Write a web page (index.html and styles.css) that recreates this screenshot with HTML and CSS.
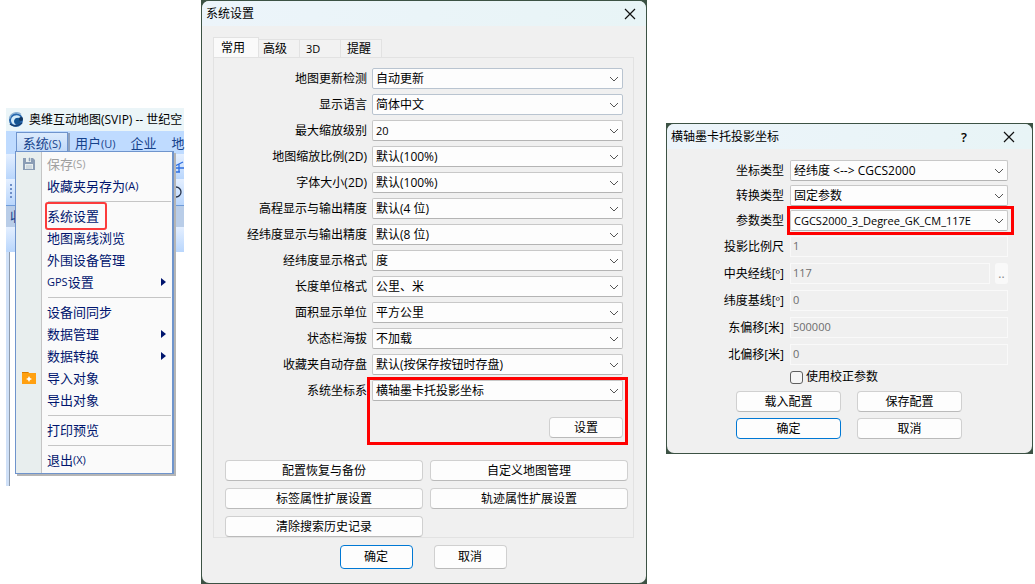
FILE: index.html
```
<!DOCTYPE html>
<html lang="zh-CN">
<head>
    <meta charset="UTF-8">
    <meta name="viewport" content="width=device-width, initial-scale=1.0">
    <title>系统设置</title>
    <link rel="stylesheet" href="styles.css">
</head>
<body>
<main class="page">

    <!-- Main window with the open system menu -->
    <section class="app">
        <header class="app-title">
            <svg class="logo" viewBox="0 0 16 16" width="16" height="16">
                <circle cx="8" cy="8" r="7" fill="#2767ad"/>
                <path d="M13 2.500A7 7 0 0 0 1.500 6.500" fill="none" stroke="#8fb4d6" stroke-width="1.500"/>
                <path d="M12 4.500A5.500 5.500 0 0 0 3 9Q4 13 8 13Q4.500 10 7 7Q9 5 12.500 6z" fill="#d4ecfa"/>
                <circle cx="9.500" cy="9" r="3" fill="#15538f"/>
                <circle cx="13" cy="7" r="2" fill="#12365e"/>
                <path d="M2 12Q7 16 14 11" fill="none" stroke="#173f70" stroke-width="1.500"/>
            </svg>
            <span>奥维互动地图(SVIP) -- 世纪空</span>
        </header>
        <nav class="menubar">
            <button class="menubar-item open">系统<small>(S)</small></button>
            <button class="menubar-item">用户<small>(U)</small></button>
            <button class="menubar-item">企业</button>
            <button class="menubar-item">地</button>
        </nav>
        <div class="toolbar">
            <svg viewBox="0 0 10 12" width="10" height="12"><path d="M0 7h10M5 3v8M1 5l8-4M1 11h5" fill="none" stroke="#2f6fe0" stroke-width="1.300"/></svg>
        </div>
        <div class="toolbar second">
            <span class="grip"></span>
            <svg viewBox="0 0 10 14" width="10" height="14"><circle cx="2" cy="7" r="5" fill="none" stroke="#26324a" stroke-width="1.300"/></svg>
        </div>
        <div class="side-title">收藏夹</div>
        <div class="toolbar third"></div>
        <div class="canvas"></div>

        <div class="menu">
            <button class="menu-item" disabled>
                <svg class="icon" viewBox="0 0 14 14" width="14" height="14">
                    <path d="M1 1h10l2 2v10H1z" fill="#8b9db5"/>
                    <path d="M4 1h5v4H4zM3 7h8v5H3z" fill="#e8eeee"/>
                    <path d="M7 1h1v3H7zM4 9h6M4 11h6" fill="#8b9db5" stroke="#8b9db5" stroke-width=".5"/>
                </svg>
                保存<small>(S)</small>
            </button>
            <button class="menu-item">收藏夹另存为<small>(A)</small></button>
            <hr>
            <button class="menu-item marked"><span>系统设置</span></button>
            <button class="menu-item">地图离线浏览</button>
            <button class="menu-item">外围设备管理</button>
            <button class="menu-item sub"><small>GPS</small>设置</button>
            <hr>
            <button class="menu-item">设备间同步</button>
            <button class="menu-item sub">数据管理</button>
            <button class="menu-item sub">数据转换</button>
            <button class="menu-item">
                <svg class="icon" viewBox="0 0 14 14" width="14" height="14">
                    <path d="M0 1h6l1 1h7v11H0z" fill="#ffa010"/>
                    <path d="M0 1h6l1 1H0z" fill="#d97c00"/>
                    <path d="M7 5l1 2 2 1-2 1-1 2-1-2-2-1 2-1z" fill="#ffffff"/>
                </svg>
                导入对象
            </button>
            <button class="menu-item">导出对象</button>
            <hr>
            <button class="menu-item">打印预览</button>
            <hr>
            <button class="menu-item">退出<small>(X)</small></button>
        </div>
    </section>

    <!-- System settings -->
    <section class="dialog settings">
        <div class="dialog-inner">
            <header class="dialog-title">
                <span>系统设置</span>
                <button class="title-btn" aria-label="关闭"><svg viewBox="0 0 12 12" width="12" height="12"><path d="M1 1l10 10M11 1L1 11" stroke="#111" stroke-width="1.200"/></svg></button>
            </header>
            <div class="tabs" role="tablist">
                <button class="tab active" role="tab">常用</button>
                <button class="tab" role="tab">高级</button>
                <button class="tab latin" role="tab">3D</button>
                <button class="tab" role="tab">提醒</button>
            </div>
            <form class="pane">
                <div class="rows">
                    <label for="update">地图更新检测</label>
                    <select id="update" class="hot"><option>自动更新</option></select>
                    <label for="lang">显示语言</label>
                    <select id="lang" class="hot"><option>简体中文</option></select>
                    <label for="zoom">最大缩放级别</label>
                    <select id="zoom" class="latin"><option>20</option></select>
                    <label for="scale">地图缩放比例(2D)</label>
                    <select id="scale"><option>默认(100%)</option></select>
                    <label for="font">字体大小(2D)</label>
                    <select id="font"><option>默认(100%)</option></select>
                    <label for="alt">高程显示与输出精度</label>
                    <select id="alt"><option>默认(4 位)</option></select>
                    <label for="lnglat">经纬度显示与输出精度</label>
                    <select id="lnglat"><option>默认(8 位)</option></select>
                    <label for="format">经纬度显示格式</label>
                    <select id="format"><option>度</option></select>
                    <label for="length">长度单位格式</label>
                    <select id="length"><option>公里、米</option></select>
                    <label for="area">面积显示单位</label>
                    <select id="area"><option>平方公里</option></select>
                    <label for="status">状态栏海拔</label>
                    <select id="status"><option>不加载</option></select>
                    <label for="save">收藏夹自动存盘</label>
                    <select id="save"><option>默认(按保存按钮时存盘)</option></select>
                    <label for="coord">系统坐标系</label>
                    <div class="red-box coord-box">
                        <select id="coord"><option>横轴墨卡托投影坐标</option></select>
                        <button type="button" class="btn small-btn">设置</button>
                    </div>
                </div>
                <div class="extras">
                    <button type="button" class="btn">配置恢复与备份</button>
                    <button type="button" class="btn">自定义地图管理</button>
                    <button type="button" class="btn">标签属性扩展设置</button>
                    <button type="button" class="btn">轨迹属性扩展设置</button>
                    <button type="button" class="btn">清除搜索历史记录</button>
                </div>
            </form>
            <footer class="dialog-actions">
                <button class="btn primary">确定</button>
                <button class="btn">取消</button>
            </footer>
        </div>
    </section>

    <!-- Projection parameters -->
    <section class="dialog projection">
        <div class="dialog-inner">
            <header class="dialog-title">
                <span>横轴墨卡托投影坐标</span>
                <button class="title-btn help" aria-label="帮助">?</button>
                <button class="title-btn" aria-label="关闭"><svg viewBox="0 0 12 12" width="12" height="12"><path d="M1 1l10 10M11 1L1 11" stroke="#111" stroke-width="1.200"/></svg></button>
            </header>
            <form class="params">
                <div class="rows choices">
                    <label for="ctype">坐标类型</label>
                    <select id="ctype"><option>经纬度 &lt;--&gt; CGCS2000</option></select>
                    <label for="conv">转换类型</label>
                    <select id="conv"><option>固定参数</option></select>
                    <label for="ptype">参数类型</label>
                    <div class="red-box type-box">
                        <select id="ptype" class="latin"><option>CGCS2000_3_Degree_GK_CM_117E</option></select>
                    </div>
                </div>
                <div class="rows values">
                    <label for="ratio">投影比例尺</label>
                    <input type="text" id="ratio" class="latin" value="1" disabled>
                    <label for="meridian">中央经线[º]</label>
                    <div class="with-button">
                        <input type="text" id="meridian" class="latin" value="117" disabled>
                        <button type="button" class="more" disabled>..</button>
                    </div>
                    <label for="base">纬度基线[º]</label>
                    <input type="text" id="base" class="latin" value="0" disabled>
                    <label for="east">东偏移[米]</label>
                    <input type="text" id="east" class="latin" value="500000" disabled>
                    <label for="north">北偏移[米]</label>
                    <input type="text" id="north" class="latin" value="0" disabled>
                </div>
                <div class="check">
                    <input type="checkbox" id="correct">
                    <label for="correct">使用校正参数</label>
                </div>
                <div class="param-actions">
                    <button type="button" class="btn">载入配置</button>
                    <button type="button" class="btn">保存配置</button>
                    <button type="button" class="btn primary">确定</button>
                    <button type="button" class="btn">取消</button>
                </div>
            </form>
        </div>
    </section>

</main>
</body>
</html>
```
FILE: styles.css
```
* {
    box-sizing: border-box;
}
body {
    margin: 0;
    background: #fff;
    color: #000;
    font-family: "Open Sans", "Noto Sans CJK SC", sans-serif;
    font-size: 12px;
    line-height: 16px;
}
button, input, select {
    margin: 0;
    font: inherit;
    color: inherit;
}
.latin {
    font-size: 11px;
}
svg {
    display: block;
    flex: none;
}
.page {
    display: grid;
    grid-template-columns: 178fr 446fr 369fr;
    column-gap: 17px;
    align-items: start;
    padding: 0 2px 0 6px;
}

/* main window */
.app {
    position: relative;
    min-width: 0;
    margin-top: 108px;
}
.app-title {
    display: flex;
    align-items: center;
    gap: 5px;
    height: 23px;
    padding-left: 2px;
    background: #ebf5f8;
    white-space: nowrap;
}
.menubar {
    display: flex;
    height: 23px;
    padding: 1px 0 0 10px;
    background: #bfdbff;
}
.menubar-item {
    flex: none;
    padding: 0 0 0 7px;
    margin-right: 8px;
    border: 0;
    background: none;
    color: #15428b;
    font-size: 13px;
    line-height: 18px;
}
.menubar-item:last-child {
    margin-right: 0;
}
.menubar-item small, .menu-item small {
    font-size: 11px;
}
.menubar-item.open {
    width: 52px;
    margin-right: 0;
    padding: 0 4px;
    border: 1px solid #6f94cc;
    border-bottom: 0;
    background: linear-gradient(#dcebfd, #bcd6f8);
    box-shadow: 2px 1px 0 #8fa3bf;
}
.toolbar {
    display: flex;
    align-items: center;
    justify-content: flex-end;
    height: 25px;
    background: linear-gradient(#e4efff, #b9d6fc);
}
.toolbar.second {
    justify-content: space-between;
    height: 27px;
    border-bottom: 1px solid #6f9bd8;
}
.grip {
    width: 2px;
    height: 16px;
    margin-left: 4px;
    background: repeating-linear-gradient(#6f8fc8 0 2px, transparent 2px 4px);
}
.side-title {
    height: 21px;
    padding-left: 4px;
    background: #b9cde8;
    color: #15428b;
    font-size: 13px;
    line-height: 20px;
}
.canvas {
    height: 234px;
    border-left: 3px solid #cfe0f7;
    box-shadow: inset 1px 0 0 #8f9bab;
}

.menu {
    position: absolute;
    top: 43px;
    left: 9px;
    right: 10px;
    padding: 1px 0 2px;
    border: 1px solid #6f94cc;
    border-right-width: 2px;
    background: linear-gradient(90deg, #e8eeee 25px, #c5c5c5 25px 26px, #fafafa 26px);
    box-shadow: 2px 2px 0 #b5b5b5;
}
.menu-item {
    display: flex;
    position: relative;
    align-items: center;
    width: 100%;
    height: 22px;
    padding: 0 6px 0 31px;
    border: 0;
    background: none;
    color: #00156e;
    font-size: 13px;
    white-space: nowrap;
}
.menu-item:disabled {
    color: #a0a0a0;
}
.menu-item .icon {
    position: absolute;
    top: 4px;
    left: 6px;
}
.menu-item.sub::after {
    content: "";
    margin-left: auto;
    border: 4px solid transparent;
    border-left: 5px solid #00156e;
    border-right: 0;
}
.menu-item.marked span {
    margin-left: -2px;
    padding: 4px 6px 4px 0;
    border: 2px solid #fb3b3b;
    border-radius: 3px;
}
.menu hr {
    height: 1px;
    margin: 4px 1px 3px 32px;
    border: 0;
    background: #c5c5c5;
}

/* dialogs */
.dialog {
    min-width: 0;
    padding: 1px;
    background: #3c5244;
}
.dialog-inner {
    border-radius: 7px;
    background: #f0f0f0;
    overflow: hidden;
}
.dialog-title {
    display: flex;
    align-items: center;
    height: 25px;
    padding: 0 10px 0 4px;
    background: linear-gradient(90deg, #ecf4fa, #e8f4f6);
}
.dialog-title span {
    margin-right: auto;
}
.title-btn {
    display: flex;
    padding: 0;
    border: 0;
    background: none;
}
.title-btn.help {
    margin-right: 36px;
    font-size: 13px;
    font-weight: 600;
}
.rows {
    display: grid;
    align-items: center;
}
.rows > label {
    text-align: right;
    white-space: nowrap;
}
select {
    display: block;
    width: 100%;
    min-width: 0;
    height: 21px;
    padding: 0 20px 0 3px;
    border: 1px solid #c8c8c8;
    border-bottom-color: #b4b4b4;
    border-radius: 2px;
    appearance: none;
    background: #fdfdfd url("data:image/svg+xml,%3Csvg xmlns='http://www.w3.org/2000/svg' width='10' height='6'%3E%3Cpath d='M1 1l4 4 4-4' fill='none' stroke='%23555'/%3E%3C/svg%3E") no-repeat right 3px center;
}
select.hot {
    border-color: #b9c4d0;
}
.btn {
    height: 21px;
    padding: 0;
    border: 1px solid #d0d0d0;
    border-bottom-color: #bababa;
    border-radius: 4px;
    background: #fdfdfd;
}
.btn.primary {
    border-color: #0078d4;
}
.red-box {
    border: 3px solid #f00;
}

.tabs {
    display: flex;
    align-items: flex-end;
    margin: 11px 11px 0;
}
.tab {
    width: 41px;
    height: 18px;
    padding: 0 0 0 4px;
    border: 1px solid #e2e2e2;
    border-width: 1px 1px 0 0;
    background: #f2f2f2;
    text-align: left;
}
.tab.latin, .tab:last-child {
    padding-left: 6px;
}
.tab.active {
    width: 46px;
    height: 20px;
    padding-left: 7px;
    border-left-width: 1px;
    background: #fafafa;
}
.pane {
    margin: 0 12px 0 11px;
    padding: 10px 5px 0 11px;
    border: 1px solid #e2e2e2;
}
.settings .rows {
    grid-template-columns: 142fr 251fr;
    gap: 5px;
    padding-right: 5px;
}
.settings .rows > label:last-of-type {
    align-self: start;
    padding-top: 3px;
}
.coord-box {
    margin: -3px -5px 0;
    padding: 0 2px 4px;
}
.small-btn {
    display: block;
    width: 74px;
    margin: 16px 0 0 auto;
}
.extras {
    display: grid;
    grid-template-columns: 1fr 1fr;
    gap: 7px;
    margin-top: 15px;
}
.dialog-actions {
    display: flex;
    justify-content: center;
    gap: 21px;
    padding: 7px 2px 14px 0;
}
.dialog-actions .btn {
    width: 73px;
    height: 24px;
}

.projection {
    margin: 123px 0 0 2px;
}
.projection .dialog-title {
    padding-right: 17px;
}
.params {
    padding: 11px 24px 14px 24px;
}
.params .rows {
    grid-template-columns: 93fr 218fr;
    column-gap: 6px;
}
.choices {
    row-gap: 4px;
}
.type-box {
    margin: -4px -6px -4px -3px;
    padding: 1px 3px 1px 0;
}
.values {
    row-gap: 6px;
    margin-top: 5px;
}
.values input {
    width: 100%;
    min-width: 0;
    height: 21px;
    padding: 0 2px 2px;
    border: 1px solid #f9f9f9;
    background: #f0f0f0;
    color: #6d6d6d;
}
.with-button {
    display: flex;
    gap: 5px;
}
.more {
    flex: none;
    width: 13px;
    padding: 0;
    border: 0;
    border-radius: 3px;
    background: #f9f9f9;
    color: #888;
}
.check {
    display: flex;
    align-items: center;
    gap: 3px;
    height: 16px;
    margin: 4px 0 0 99px;
}
.check input {
    width: 13px;
    height: 13px;
    appearance: none;
    border: 1px solid #5f5f5f;
    border-radius: 3px;
    background: #f5f5f5;
}
.param-actions {
    display: grid;
    grid-template-columns: 1fr 1fr;
    gap: 6px 16px;
    margin: 6px 46px 0 45px;
}
```
